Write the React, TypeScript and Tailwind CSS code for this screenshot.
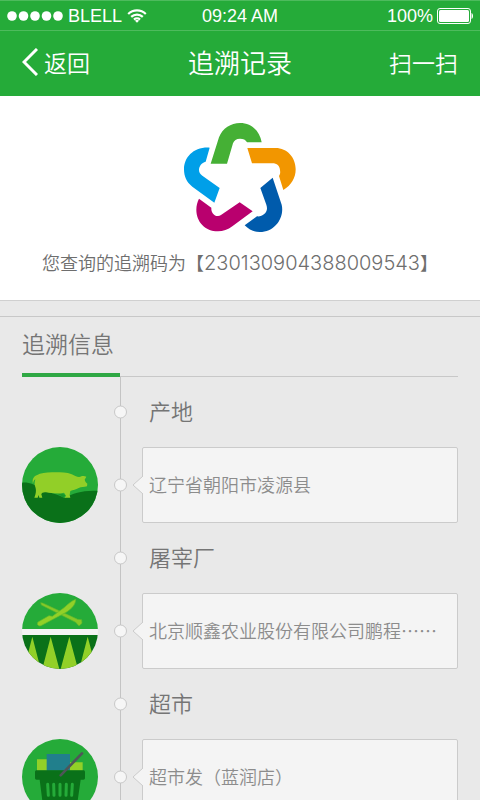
import type { ReactNode } from "react";

type Step = {
  id: string;
  title: string;
  text: string;
  icon: ReactNode;
};

function WifiIcon() {
  return (
    <svg viewBox="0 0 20 14" className="w-5 h-3.5" fill="none" stroke="white" strokeWidth="2.2">
      <path d="M1.2 5a12.6 12.6 0 0 1 17.6 0" />
      <path d="M4.2 7.9a8.3 8.3 0 0 1 11.6 0" />
      <path d="M7 10.6a4.4 4.4 0 0 1 6 0" />
      <path d="M10 13.8l-2-2a2.8 2.8 0 0 1 4 0z" fill="white" stroke="none" />
    </svg>
  );
}

function BatteryIcon() {
  return (
    <svg viewBox="0 0 36 16" className="w-9 h-4" fill="white">
      <rect x="0.5" y="0.5" width="33" height="15" rx="2.5" fill="none" stroke="white" />
      <rect x="2" y="2" width="30" height="12" rx="1.5" />
      <path d="M34.5 5c1.2.6 1.5 1.8 1.5 3s-.3 2.4-1.5 3z" />
    </svg>
  );
}

function Logo() {
  return (
    <svg viewBox="40 36 342 333" className="w-[114px] h-[111px]">
      <path
        fill="#45b035"
        d="M123 161L148 82C158 55 184 39 211 39C245 39 270 62 276 97H232C228 89 221 86 211 86C200 86 193 91 190 100L172 161Z"
      />
      <path
        fill="#f29600"
        d="M233 114H318C352 114 378 142 378 178C378 204 365 226 341 240L328 198C332 192 332 188 331 180C330 168 322 160 308 160H247Z"
      />
      <path
        fill="#005bac"
        d="M309 203L336 284C345 322 316 366 270 366C252 366 238 359 225 346L262 319C276 321 292 311 292 295C292 291 291 288 290 284L272 234Z"
      />
      <path
        fill="#b9006e"
        d="M210 277L249 304L188 349C175 359 160 364 145 364C106 364 80 335 80 299C80 286 83 276 88 266L125 293C124 306 132 318 145 318C148 318 151 317 154 315Z"
      />
      <path
        fill="#009fe8"
        d="M120 113L108 155C96 158 88 168 88 180C88 188 92 193 98 197L150 234L134 278L68 230C50 217 43 198 43 178C43 142 72 110 120 113Z"
      />
    </svg>
  );
}

function PigIcon() {
  return (
    <svg viewBox="36 35 228 228" className="size-[76px]">
      <clipPath id="pig-circle">
        <circle cx="150" cy="149" r="114" />
      </clipPath>
      <g clipPath="url(#pig-circle)">
        <path fill="#25ab39" d="M30 30h240v240H30z" />
        <path fill="#0a7119" d="M30 143C50 138 75 146 100 164C112 172 130 172 165 188C190 172 225 163 270 167V270H30Z" />
        <path fill="#17962a" d="M112 172C130 166 150 170 166 180L160 188C150 176 130 170 112 172Z" />
        <path
          fill="#92cf28"
          d="M69 145C66 133 70 124 80 120C95 111 115 110 140 111C160 110 180 112 196 122C204 126 210 126 214 123C219 121 225 122 229 124L224 133C226 138 227 141 232 145L231 153C222 155 214 155 206 158C198 163 189 164 181 167L179 179L181 187H164L168 181L162 172C145 177 125 174 108 171C100 170 95 173 94 177L97 187H88L86 179L83 187H73L76 178C79 168 78 160 75 152C73 148 74 140 76 132C71 135 70 140 69 145Z"
        />
      </g>
    </svg>
  );
}

function KnifeIcon() {
  return (
    <svg viewBox="36 36 228 228" className="size-[76px]">
      <clipPath id="knife-circle">
        <circle cx="150" cy="150" r="114" />
      </clipPath>
      <g clipPath="url(#knife-circle)">
        <path fill="#25ab39" d="M30 30h240v114H30z" />
        <path fill="#f4f4f4" d="M30 144h240v18H30z" />
        <path fill="#0a7119" d="M30 162h240v108H30z" />
        <path
          fill="#92d028"
          d="M67 167L92 264H42ZM122 167L148 264H97ZM178 167L204 264H152ZM233 167L259 264H208Z"
        />
        <path
          fill="#86c828"
          stroke="#5cb82c"
          strokeWidth="2"
          d="M92 65L98 66L203 115L215 116L216 127L207 135L197 124L94 72Z"
        />
        <path
          fill="#92d028"
          stroke="#62bb2c"
          strokeWidth="2"
          d="M197 55C197 70 187 82 170 93L125 117L93 134C85 137 79 130 84 123L117 104L127 106L162 80C174 70 184 60 197 55Z"
        />
      </g>
    </svg>
  );
}

function BasketIcon() {
  return (
    <svg viewBox="36 173 228 228" className="size-[76px]">
      <circle cx="150" cy="287" r="114" fill="#25ab39" />
      <path fill="#92d028" d="M81 234h30v34H81zM167 243h51v25h-51z" />
      <path fill="#217f8c" d="M110 218h70v50h-70z" />
      <path
        fill="#0a7119"
        d="M80 267H220C223 267 225 269 225 272V290C225 293 223 295 220 295H212L203 358C202 363 199 366 194 366H106C101 366 98 363 97 358L89 295H80C77 295 75 293 75 290V272C75 269 77 267 80 267Z"
      />
      <path
        stroke="#25ab39"
        strokeWidth="9"
        strokeLinecap="round"
        d="M113 309L115 342M131 309L132 342M150 309V342M169 309L168 342M187 309L185 342"
      />
      <path stroke="#4f5658" strokeWidth="8" strokeLinecap="round" d="M152 282L216 216" />
    </svg>
  );
}

const steps: Step[] = [
  { id: "origin", title: "产地", text: "辽宁省朝阳市凌源县", icon: <PigIcon /> },
  { id: "slaughter", title: "屠宰厂", text: "北京顺鑫农业股份有限公司鹏程……", icon: <KnifeIcon /> },
  { id: "market", title: "超市", text: "超市发（蓝润店）", icon: <BasketIcon /> },
];

function Dot() {
  return (
    <span className="absolute -left-[7px] top-1/2 -translate-y-1/2 size-[13px] rounded-full border border-[#c8c8c8] bg-[#f6f6f6]" />
  );
}

function StepItem({ step }: { step: Step }) {
  return (
    <li className="flex">
      <div className="w-[98px] shrink-0 pt-[70px]">{step.icon}</div>
      <div className="flex-1 min-w-0 border-l border-[#c4c4c4]">
        <div className="relative h-[70px] flex items-center pl-7 pb-1">
          <Dot />
          <h3 className="text-[22px] leading-8 text-[#757575]">{step.title}</h3>
        </div>
        <div className="relative pl-[21px]">
          <Dot />
          <div className="h-[76px] flex items-center px-1.5 pb-0.5 rounded-xs border border-[#cbcbcb] bg-[#f4f4f4]">
            <p className="text-lg whitespace-nowrap text-[#8c8c8c]">{step.text}</p>
          </div>
          <svg viewBox="0 0 11 20" className="absolute left-[11px] top-7 w-[11px] h-5">
            <path d="M11 1L1 10l10 9" fill="#f4f4f4" stroke="#cbcbcb" />
          </svg>
        </div>
      </div>
    </li>
  );
}

export default function App() {
  return (
    <div className="h-screen flex flex-col overflow-hidden bg-[#e9e9e9] font-['Noto_Sans_CJK_SC',sans-serif] font-[350]">
      <header className="shrink-0 bg-[#25ab39] text-white">
        <div className="grid grid-cols-3 items-center h-[31px] px-[7px] border-y border-[#4dbb5d] font-['Liberation_Sans',sans-serif] text-lg leading-7">
          <div className="flex items-center gap-[5px]">
            <svg viewBox="0 0 56 10" className="w-14 h-2.5" fill="white">
              {[5, 16.5, 28, 39.5, 51].map((x) => (
                <circle key={x} cx={x} cy="5" r="4.8" />
              ))}
            </svg>
            <span>BLELL</span>
            <WifiIcon />
          </div>
          <div className="text-center">09:24 AM</div>
          <div className="flex items-center justify-end gap-1">
            <span>100%</span>
            <BatteryIcon />
          </div>
        </div>
        <nav className="grid grid-cols-3 items-center h-[65px] px-[22px] pb-1">
          <button type="button" className="flex items-center gap-1.5 text-[23px] leading-8">
            <svg viewBox="0 0 16 28" className="w-4 h-7" fill="none" stroke="white" strokeWidth="3">
              <path d="M15 1L2 14L15 27" />
            </svg>
            返回
          </button>
          <h1 className="text-[26px] leading-8 text-center whitespace-nowrap">追溯记录</h1>
          <button type="button" className="justify-self-end text-[23px] leading-8">
            扫一扫
          </button>
        </nav>
      </header>

      <main className="flex-1 min-h-0 overflow-y-auto">
        <section className="flex flex-col items-center h-[205px] pt-[26px] bg-white border-b border-[#d0d0d0]">
          <Logo />
          <p className="mt-[15px] text-lg leading-7 whitespace-nowrap text-[#6e6e6e]">
            您查询的追溯码为【
            <span className="font-['Inter',sans-serif] font-light text-xl">230130904388009543</span>】
          </p>
        </section>

        <section className="mt-[15px] px-[22px] border-t border-[#c8c8c8]">
          <div className="flex h-[60px] border-b border-[#c8c8c8]">
            <h2 className="w-[98px] h-[60px] border-b-4 border-[#2fa844] pt-2.5 text-[23px] leading-8 whitespace-nowrap text-[#757575]">
              追溯信息
            </h2>
          </div>
          <ol>
            {steps.map((step) => (
              <StepItem key={step.id} step={step} />
            ))}
          </ol>
        </section>
      </main>
    </div>
  );
}
